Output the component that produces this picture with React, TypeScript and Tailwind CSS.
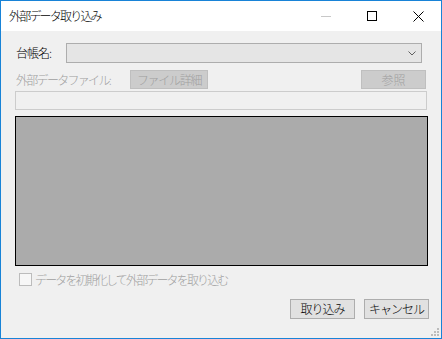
import React from "react";

const font = { fontFamily: '"Noto Sans CJK JP", "Noto Sans", sans-serif' };

function CaptionButtons() {
	return (
		<div className="ml-auto flex h-full">
			<div className="w-[46px] h-full flex items-center justify-center">
				<div className="w-[10px] h-px bg-[#c8c8c8]" />
			</div>
			<div className="w-[46px] h-full flex items-center justify-center">
				<div className="w-[10px] h-[10px] border border-black" />
			</div>
			<div className="w-[46px] h-full flex items-center justify-center">
				<svg width="11" height="11" viewBox="0 0 11 11">
					<path d="M0.5 0.5 L10.5 10.5 M10.5 0.5 L0.5 10.5" stroke="#000" strokeWidth="1" />
				</svg>
			</div>
		</div>
	);
}

export default function App() {
	return (
		<div
			className="w-[442px] h-[339px] border border-[#1883d7] bg-[#f0f0f0] flex flex-col text-[12px] leading-none font-light text-black overflow-hidden"
			style={font}
		>
			<div className="h-[30px] bg-white flex items-center pl-[8px] shrink-0">
				<span className="tracking-[-1.8px]">外部データ取り込み</span>
				<CaptionButtons />
			</div>

			<div className="flex-1 flex flex-col pl-[14px] pr-[12px] relative">
				{/* 台帳名 */}
				<div className="flex items-center mt-[12px] h-[20px]">
					<span className="w-[51px] pl-[1px] tracking-[-1px] whitespace-nowrap">台帳名:</span>
					<div className="w-[356px] h-[20px] border border-[#adadad] bg-[#e5e5e5] flex items-center justify-end pr-[5px]">
						<svg width="8" height="5" viewBox="0 0 8 5">
							<path d="M0.5 0.5 L4 4 L7.5 0.5" stroke="#606060" fill="none" strokeWidth="1" />
						</svg>
					</div>
				</div>

				{/* 外部データファイル */}
				<div className="flex items-center mt-[7px] h-[19px]">
					<span className="w-[115px] shrink-0 whitespace-nowrap pl-[1px] text-[#a0a0a0] tracking-[-1.7px]">外部データファイル:</span>
					<div className="w-[78px] h-[19px] border border-[#bfbfbf] bg-[#cccccc] text-[#a0a0a0] flex items-center justify-center tracking-[-1.3px]">
						ファイル詳細
					</div>
					<div className="ml-auto mr-[3px] w-[65px] h-[19px] border border-[#bfbfbf] bg-[#cccccc] text-[#a0a0a0] flex items-center justify-center">
						参照
					</div>
				</div>

				<div className="mt-[2px] w-[412px] h-[19px] border border-[#cccccc] bg-[#f0f0f0]" />

				<div className="mt-[6px] w-[413px] h-[150px] border border-black bg-[#ababab]" />

				{/* checkbox */}
				<div className="flex items-center mt-[7px] pl-[4px]">
					<div className="w-[13px] h-[13px] border border-[#bcbcbc] bg-[#f7f7f7]" />
					<span className="ml-[3px] text-[#a0a0a0] tracking-[-1.85px]">データを初期化して外部データを取り込む</span>
				</div>

				<div className="flex justify-end gap-[9px] mt-[13px]">
					<div className="w-[65px] h-[20px] border border-[#adadad] bg-[#e1e1e1] flex items-center justify-center tracking-[-1px]">
						取り込み
					</div>
					<div className="w-[65px] h-[20px] border border-[#adadad] bg-[#e1e1e1] flex items-center justify-center tracking-[-1px]">
						キャンセル
					</div>
				</div>

				<svg className="absolute right-[1px] bottom-[1px]" width="10" height="10" viewBox="0 0 10 10">
					<rect x="7" y="1" width="2" height="2" fill="#bcbcbc" />
					<rect x="4" y="4" width="2" height="2" fill="#bcbcbc" />
					<rect x="7" y="4" width="2" height="2" fill="#bcbcbc" />
					<rect x="1" y="7" width="2" height="2" fill="#bcbcbc" />
					<rect x="4" y="7" width="2" height="2" fill="#bcbcbc" />
					<rect x="7" y="7" width="2" height="2" fill="#bcbcbc" />
				</svg>
			</div>
		</div>
	);
}
